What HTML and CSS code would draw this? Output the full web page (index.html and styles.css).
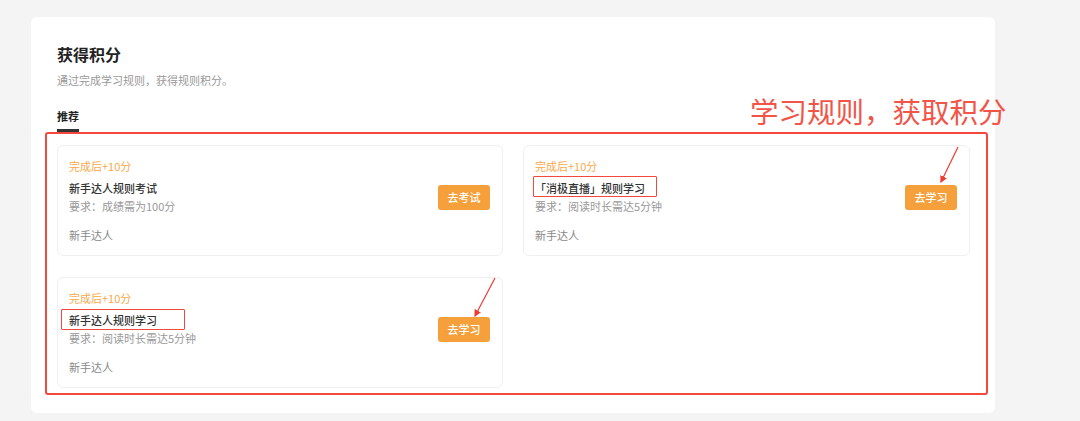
FILE: index.html
```html
<!DOCTYPE html>
<html>
<head>
  <meta charset="utf-8">
  <title>获得积分</title>
  <link rel="stylesheet" href="styles.css">
</head>
<body>
  <div class="panel">
    <h1 class="panel-title">获得积分</h1>
    <p class="panel-desc">通过完成学习规则，获得规则积分。</p>

    <div class="tabs">
      <span class="tab active">推荐</span>
    </div>

    <div class="task-grid">
      <!-- Task 1 -->
      <div class="task-card">
        <div class="task-reward">完成后+10分</div>
        <div class="task-row">
          <div class="task-info">
            <div class="task-name">新手达人规则考试</div>
            <div class="task-req">要求：成绩需为100分</div>
          </div>
          <button class="task-button">去考试</button>
        </div>
        <div class="task-level">新手达人</div>
      </div>

      <!-- Task 2 -->
      <div class="task-card">
        <div class="task-reward">完成后+10分</div>
        <div class="task-row">
          <div class="task-info">
            <div class="task-name">「消极直播」规则学习</div>
            <div class="task-req">要求：阅读时长需达5分钟</div>
          </div>
          <button class="task-button">去学习</button>
        </div>
        <div class="task-level">新手达人</div>
      </div>

      <!-- Task 3 -->
      <div class="task-card">
        <div class="task-reward">完成后+10分</div>
        <div class="task-row">
          <div class="task-info">
            <div class="task-name">新手达人规则学习</div>
            <div class="task-req">要求：阅读时长需达5分钟</div>
          </div>
          <button class="task-button">去学习</button>
        </div>
        <div class="task-level">新手达人</div>
      </div>
    </div>

    <!-- Annotations drawn over the screenshot -->
    <div class="note-text">学习规则，获取积分</div>
    <div class="note-box note-box-main"></div>
    <div class="note-box note-box-a"></div>
    <div class="note-box note-box-b"></div>
    <svg class="note-arrows" width="964" height="396" viewBox="0 0 964 396">
      <defs>
        <marker id="head" markerWidth="6" markerHeight="6" refX="5" refY="3" orient="auto">
          <path d="M0,0 L6,3 L0,6 Z" fill="#f03a30"/>
        </marker>
      </defs>
      <line x1="927" y1="130" x2="910" y2="165" stroke="#f03a30" stroke-width="1.2" marker-end="url(#head)"/>
      <line x1="464" y1="261" x2="444" y2="299" stroke="#f03a30" stroke-width="1.2" marker-end="url(#head)"/>
    </svg>
  </div>
</body>
</html>
```

FILE: styles.css
```css
body {
  margin: 0;
  padding: 17px 0 0 31px;
  background-color: #f4f4f5;
  font-family: "Noto Sans CJK SC", "Noto Sans", sans-serif;
  color: #333;
}

.panel {
  position: relative;
  width: 964px;
  box-sizing: border-box;
  padding: 26px 25px 25px 26px;
  background-color: #fff;
  border-radius: 6px;
}

.panel-title {
  margin: 0;
  font-size: 16px;
  line-height: 22px;
  font-weight: 600;
  color: #222;
}

.panel-desc {
  margin: 8px 0 0;
  font-size: 11px;
  line-height: 15px;
  color: #999;
}

.tabs {
  margin-top: 20px;
  display: flex;
}

.tab {
  font-size: 11px;
  line-height: 16px;
  font-weight: 600;
  padding-bottom: 5px;
  color: #222;
}

.tab.active {
  border-bottom: 3px solid #333;
}

.task-grid {
  margin-top: 13px;
  display: grid;
  grid-template-columns: 446px 447px;
  column-gap: 20px;
  row-gap: 21px;
}

.task-card {
  border: 1px solid #efefef;
  border-radius: 6px;
  padding: 11px;
  font-size: 11px;
  line-height: 18px;
}

.task-reward {
  color: #f8a94c;
}

.task-row {
  margin-top: 4px;
  display: flex;
  align-items: center;
  justify-content: space-between;
}

.task-name {
  font-weight: 500;
  color: #333;
}

.task-req {
  color: #999;
}

.task-level {
  margin-top: 11px;
  color: #888;
}

.task-button {
  width: 52px;
  height: 25px;
  margin-right: 1px;
  border: none;
  border-radius: 3px;
  background-color: #f5a03a;
  color: #fff;
  font-family: inherit;
  font-size: 11px;
  font-weight: 500;
  padding: 0;
  cursor: pointer;
}

/* annotations */
.note-text {
  position: absolute;
  left: 719px;
  top: 77px;
  font-size: 28.5px;
  line-height: 34px;
  color: #f25447;
  white-space: nowrap;
}

.note-box {
  position: absolute;
  box-sizing: border-box;
  border: 2px solid #f2483e;
  border-radius: 3px;
}

.note-box-main {
  left: 14px;
  top: 115px;
  width: 943px;
  height: 263px;
}

.note-box-a {
  left: 502px;
  top: 159px;
  width: 124px;
  height: 21px;
  border-width: 1.5px;
  border-radius: 1px;
}

.note-box-b {
  left: 30px;
  top: 292px;
  width: 124px;
  height: 21px;
  border-width: 1.5px;
  border-radius: 1px;
}

.note-arrows {
  position: absolute;
  left: 0;
  top: 0;
  pointer-events: none;
}
```
